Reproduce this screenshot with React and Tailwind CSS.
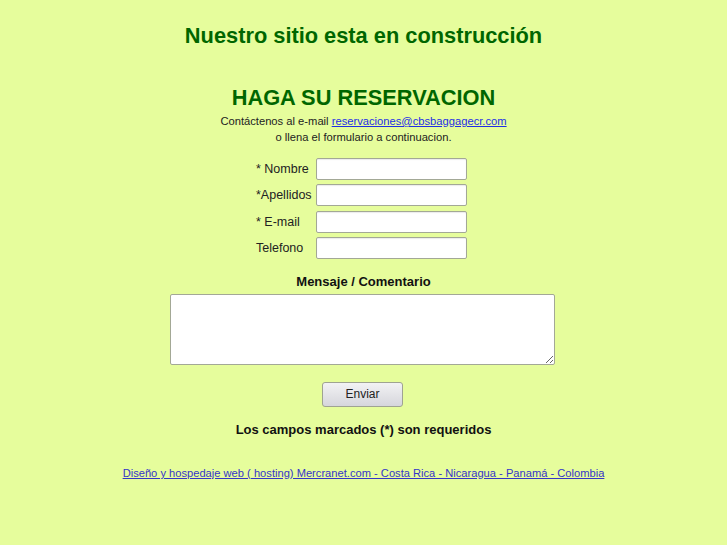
export default function App() {
  const fields = [
    { label: "* Nombre", type: "text" },
    { label: "*Apellidos", type: "text" },
    { label: "* E-mail", type: "email" },
    { label: "Telefono", type: "text" },
  ]

  return (
    <div className="min-h-screen bg-[#e6fd9c] pt-[24px] text-center font-['Liberation_Sans',Arial,sans-serif] text-[#1a1a1a]">
      <h1 className="text-[21.8px] leading-[24px] font-bold text-[#006600]">
        Nuestro sitio esta en construcción
      </h1>

      <h2 className="mt-[37px] text-[21.8px] leading-[25px] font-bold text-[#006600]">
        HAGA SU RESERVACION
      </h2>
      <p className="mt-[3px] text-[11.2px] leading-[16px] text-[#222]">
        Contáctenos al e-mail{" "}
        <a href="#" className="text-[#1f2ee6] underline">reservaciones@cbsbaggagecr.com</a>
        <br />
        o llena el formulario a continuacion.
      </p>

      <form onSubmit={e => e.preventDefault()}>
        <div className="mx-auto mt-[13px] flex w-[215px] flex-col gap-[4.3px] pr-[4px]">
          {fields.map(f => (
            <div key={f.label} className="flex h-[22px] items-center">
              <label className="w-[60px] text-left text-[12.5px] leading-[16px] text-[#222]">{f.label}</label>
              <input
                type={f.type}
                className="h-[22px] w-[151px] rounded-[2px] border border-[#a3a896] bg-white px-1 text-[13px] shadow-[inset_0_1px_1px_rgba(0,0,0,0.08)] outline-none"
              />
            </div>
          ))}
        </div>

        <p className="mt-[15px] text-[13px] leading-[16px] font-bold text-[#111]">Mensaje / Comentario</p>
        <textarea className="mx-auto mt-[4px] block h-[71px] w-[385px] -translate-x-[1px] rounded-[2px] border border-[#a3a896] bg-white p-1 text-[13px] outline-none"></textarea>

        <button className="mx-auto mt-[17px] block h-[25px] w-[81px] -translate-x-[1px] cursor-pointer rounded-[3px] border border-[#9fa392] bg-gradient-to-b from-[#f2f2f4] to-[#d6d6dc] text-[12px] text-[#222]">
          Enviar
        </button>
      </form>

      <p className="mt-[15px] text-[13px] leading-[16px] font-bold text-[#111]">
        Los campos marcados (*) son requeridos
      </p>

      <p className="mt-[28px] text-[11.15px] leading-[14px]">
        <a href="#" className="text-[#3535c8] underline">
          Diseño y hospedaje web ( hosting) Mercranet.com - Costa Rica - Nicaragua - Panamá - Colombia
        </a>
      </p>
    </div>
  )
}
